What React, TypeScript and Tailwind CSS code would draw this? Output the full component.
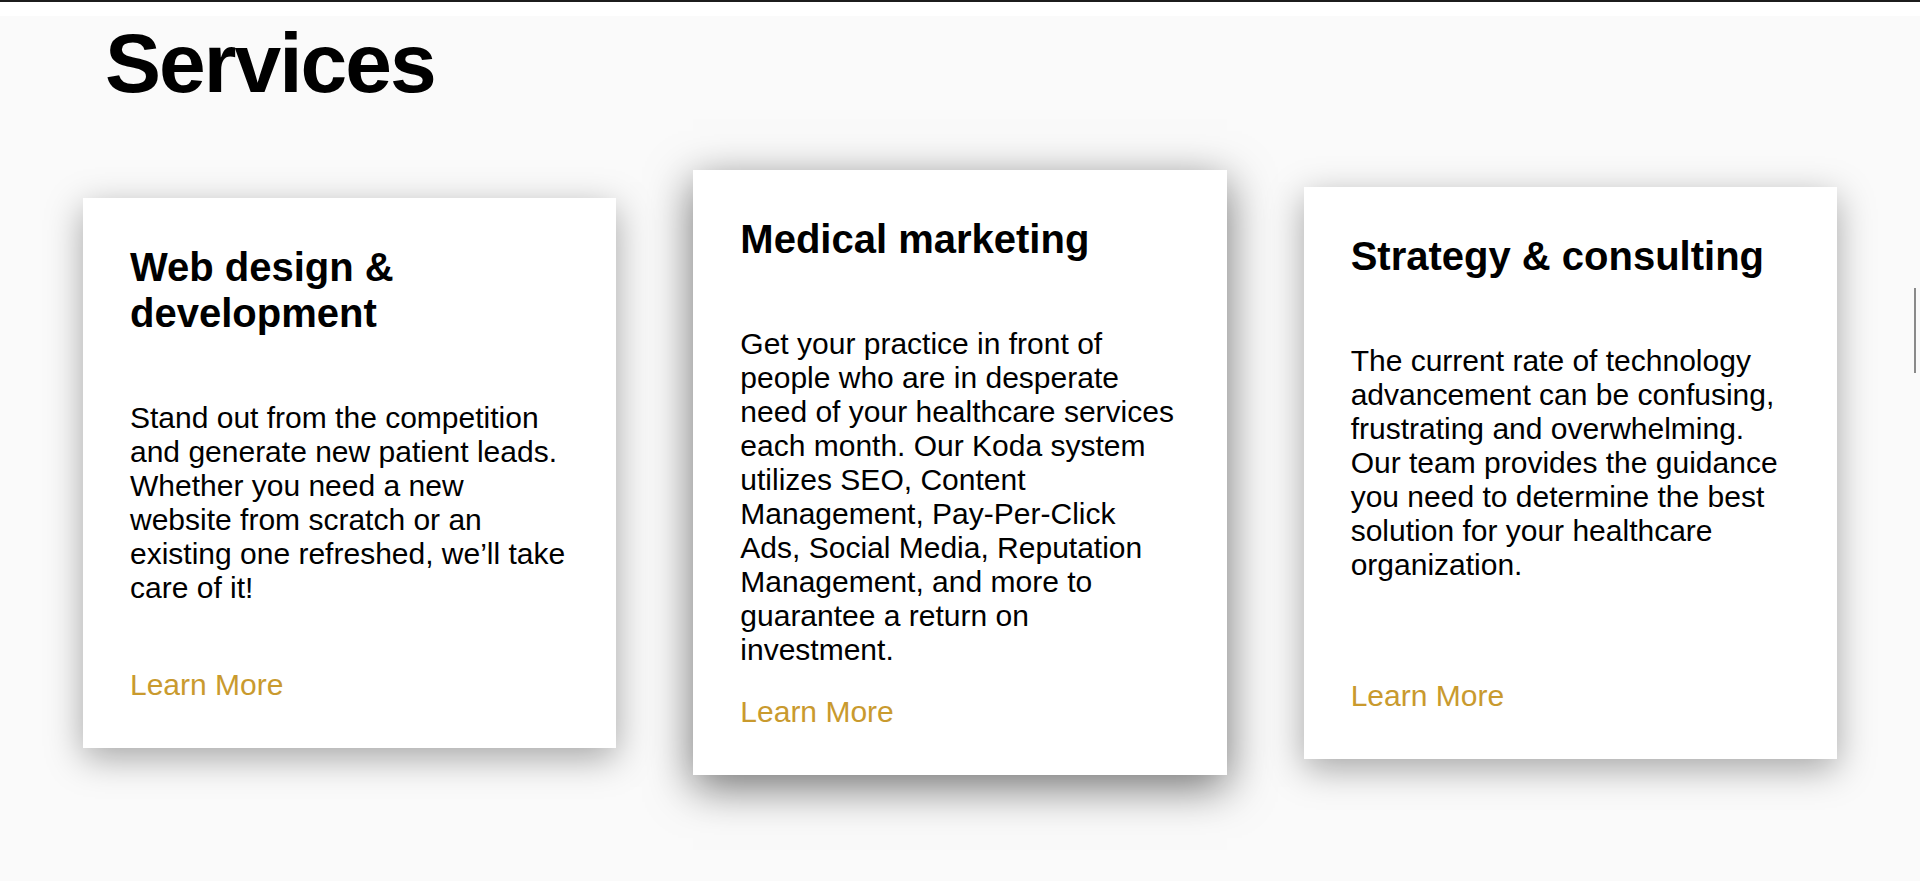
const cards = [
  {
    title: "Web design & development",
    body: "Stand out from the competition and generate new patient leads. Whether you need a new website from scratch or an existing one refreshed, we’ll take care of it!",
    linkGap: "mt-[63px]",
    shadow: "shadow-[0_10px_34px_rgba(0,0,0,0.34)]",
  },
  {
    title: "Medical marketing",
    body: "Get your practice in front of people who are in desperate need of your healthcare services each month. Our Koda system utilizes SEO, Content Management, Pay-Per-Click Ads, Social Media, Reputation Management, and more to guarantee a return on investment.",
    linkGap: "mt-[28px]",
    shadow: "shadow-[0_12px_42px_rgba(0,0,0,0.55)]",
  },
  {
    title: "Strategy & consulting",
    body: "The current rate of technology advancement can be confusing, frustrating and overwhelming. Our team provides the guidance you need to determine the best solution for your healthcare organization.",
    linkGap: "mt-[97px]",
    shadow: "shadow-[0_10px_34px_rgba(0,0,0,0.34)]",
  },
];

export default function App() {
  return (
    <div className="relative min-h-[881px] bg-white font-['Liberation_Sans',Arial,sans-serif] text-black">
      <div className="h-[2px] bg-[#1c1c1c]" />
      <div className="h-[14px] bg-white" />
      <section className="min-h-[865px] bg-[#fafafa] px-[83px] pt-[5px]">
        <h1 className="ml-[22px] text-[84px] font-bold leading-none tracking-[-2px]">Services</h1>
        <div className="mt-[65px] flex items-center gap-[77px]">
          {cards.map((c) => (
            <div key={c.title} className={`flex-1 bg-white px-[47px] pt-[46px] pb-[46px] ${c.shadow}`}>
              <h3 className="text-[40px] font-bold leading-[1.15]">{c.title}</h3>
              <p className="mt-[65px] text-[30px] leading-[34px]">{c.body}</p>
              <a href="#" className={`block text-[30px] leading-[34px] text-[#c99a2e] ${c.linkGap}`}>
                Learn More
              </a>
            </div>
          ))}
        </div>
      </section>
      <div className="absolute right-[4px] top-[288px] h-[85px] w-[2px] bg-[#8a8a8a]" />
    </div>
  );
}
